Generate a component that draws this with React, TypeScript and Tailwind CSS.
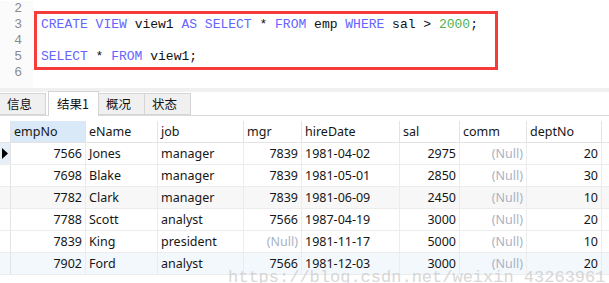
import React from 'react'

const cols = [
  { key: 'empNo', w: 'w-[75px]', right: true },
  { key: 'eName', w: 'w-[72px]', right: false },
  { key: 'job', w: 'w-[86px]', right: false },
  { key: 'mgr', w: 'w-[58px]', right: true },
  { key: 'hireDate', w: 'w-[98px]', right: false },
  { key: 'sal', w: 'w-[60px]', right: true },
  { key: 'comm', w: 'w-[67px]', right: true },
  { key: 'deptNo', w: 'w-[75px]', right: true },
]

const rows: (string | null)[][] = [
  ['7566', 'Jones', 'manager', '7839', '1981-04-02', '2975', null, '20'],
  ['7698', 'Blake', 'manager', '7839', '1981-05-01', '2850', null, '30'],
  ['7782', 'Clark', 'manager', '7839', '1981-06-09', '2450', null, '10'],
  ['7788', 'Scott', 'analyst', '7566', '1987-04-19', '3000', null, '20'],
  ['7839', 'King', 'president', null, '1981-11-17', '5000', null, '10'],
  ['7902', 'Ford', 'analyst', '7566', '1981-12-03', '3000', null, '20'],
]

const rowBg = ['bg-white', 'bg-white', 'bg-[#f7f7f7]', 'bg-white', 'bg-white', 'bg-[#f3f8fd]']

const K = ({ children }: { children: React.ReactNode }) => (
  <span className="text-[#6464ff]">{children}</span>
)

function Editor() {
  const lines: React.ReactNode[] = [
    '',
    <>
      <K>CREATE VIEW</K> view1 <K>AS SELECT</K> * <K>FROM</K> emp <K>WHERE</K> sal &gt;{' '}
      <span className="text-[#4fb04f]">2000</span>;
    </>,
    '',
    <>
      <K>SELECT</K> * <K>FROM</K> view1;
    </>,
    '',
  ]
  return (
    <div className="relative h-[88px] bg-white font-['Liberation_Mono',monospace] text-[13px] text-[#111]">
      <div className="flex pt-[1px]">
        <div className="w-[33px] bg-[#fbfbfb] h-[87px]">
          {[2, 3, 4, 5, 6].map((n) => (
            <div key={n} className="h-4 leading-4 pr-[11px] text-right text-[#8a8a8a]">
              {n}
            </div>
          ))}
        </div>
        <div className="pl-2">
          {lines.map((l, i) => (
            <div key={i} className="h-4 leading-4 whitespace-pre">
              {l}
            </div>
          ))}
        </div>
      </div>
      <div className="absolute left-[34px] top-[11px] w-[464px] h-[59px] border-[3px] border-[#f63b3b]" />
    </div>
  )
}

function Tabs() {
  const tabs = ['信息', '结果1', '概况', '状态']
  return (
    <div className="bg-white">
      <div className="h-1 bg-[#f0f0f0]" />
      <div className="flex items-end h-6 border-b border-[#dadada] font-['Noto_Sans_CJK_SC',sans-serif] text-[12.5px] text-[#111]">
        {tabs.map((t, i) =>
          i === 1 ? (
            <div
              key={t}
              className="ml-[2px] w-[51px] h-[25px] -mb-px pl-2 pt-[3px] bg-white border border-b-0 border-[#d5d5d5]"
            >
              {t}
            </div>
          ) : (
            <div
              key={t}
              className="w-[46px] h-[22px] pl-[7px] pt-[1px] bg-[#f0f0f0] border border-[#d5d5d5] border-l-0 first:border-l-0"
            >
              {t}
            </div>
          )
        )}
      </div>
    </div>
  )
}

function Grid() {
  return (
    <div className="relative pt-[5px] bg-white font-['Noto_Sans','Noto_Sans_CJK_SC',sans-serif] text-[12.5px] text-[#161616]">
      <div className="flex h-[22px] border-b border-[#e3e3e3]">
        <div className="w-[11px] border-r border-[#e3e3e3]" />
        {cols.map((c, i) => (
          <div
            key={c.key}
            className={`${c.w} px-[3px] leading-[21px] border-r border-[#e3e3e3] ${i === 0 ? 'bg-[#d9e9f7]' : 'bg-white'}`}
          >
            {c.key}
          </div>
        ))}
      </div>
      {rows.map((r, ri) => (
        <div key={ri} className={`flex h-[22px] border-b border-[#ececec] ${rowBg[ri]}`}>
          <div
            className={`w-[11px] border-r border-[#e3e3e3] flex items-center ${ri === 0 ? 'bg-[#e6eef7]' : ''}`}
          >
            {ri === 0 && (
              <svg width="8" height="11" viewBox="0 0 8 11" className="ml-[2px]">
                <path d="M0 0 L6 5.5 L0 11 Z" fill="#000" />
              </svg>
            )}
          </div>
          {r.map((v, ci) => (
            <div
              key={ci}
              className={`${cols[ci].w} px-[3px] leading-[21px] border-r border-[#ececec] whitespace-nowrap ${
                cols[ci].right || v === null ? 'text-right' : ''
              } ${v === null ? 'text-[#aab2c4]' : ''}`}
            >
              {v === null ? '(Null)' : v}
            </div>
          ))}
        </div>
      ))}
      <div className="h-2" />
      <div className="absolute left-[228px] top-[152px] font-['Liberation_Mono',monospace] text-[17px] leading-5 text-[#c8c8c8] opacity-70 whitespace-nowrap pointer-events-none">
        https://blog.csdn.net/weixin_43263961
      </div>
    </div>
  )
}

export default function App() {
  return (
    <div className="w-[609px] h-[283px] overflow-hidden bg-white">
      <Editor />
      <Tabs />
      <Grid />
    </div>
  )
}
